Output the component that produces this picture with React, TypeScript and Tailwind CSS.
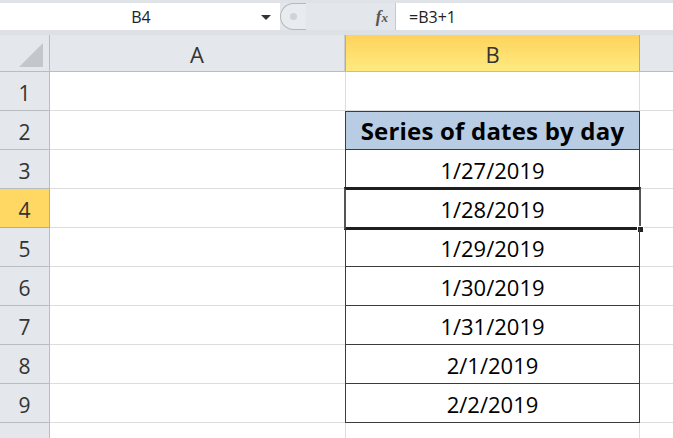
import React from 'react';

const dates = ['1/27/2019', '1/28/2019', '1/29/2019', '1/30/2019', '1/31/2019', '2/1/2019', '2/2/2019'];

function RowHead({ n, active }: { n: number; active?: boolean }) {
    return (
        <div
            className={
                active
                    ? 'flex w-[50px] shrink-0 items-center justify-center border-r border-b border-[#e2a640] bg-[#ffd763] pt-[5px] text-[21px] text-[#333]'
                    : 'flex w-[50px] shrink-0 items-center justify-center border-r border-b border-[#b9bcc0] bg-[#e4e7eb] pt-[5px] text-[21px] text-[#333]'
            }
        >
            {n < 10 ? n : ''}
        </div>
    );
}

export default function App() {
    const rows = [1, 2, 3, 4, 5, 6, 7, 8, 9, 10];
    return (
        <div className="h-[438px] w-[673px] overflow-hidden bg-white" style={{ fontFamily: '"Open Sans", "Liberation Sans", sans-serif' }}>
            {/* formula bar */}
            <div className="flex h-[35px] items-stretch border-t-[3px] border-b-[5px] border-t-[#dfe2e6] border-b-[#dde0e4] bg-[#e3e6ea]">
                <div className="relative flex w-[280px] items-center justify-center bg-white pl-[2px] text-[16px] text-[#222]">
                    B4
                    <span className="absolute right-[9px] top-[12px] h-0 w-0 border-x-[5px] border-t-[5px] border-x-transparent border-t-[#333]" />
                </div>
                <div className="relative flex w-[116px] items-center justify-end border-r border-[#c7cacd] pr-[7px]">
                    <div className="absolute left-0 top-0 flex h-[27px] w-[26px] items-center justify-center rounded-l-full border border-r-0 border-[#b5b8bc] bg-[#e9ecef]">
                        <span className="h-[7px] w-[7px] rounded-full bg-[#cfd3d7]" />
                    </div>
                    <span className="text-[17px] italic font-bold text-[#555]" style={{ fontFamily: '"Liberation Serif", serif' }}>
                        f<span className="text-[13px]">x</span>
                    </span>
                </div>
                <div className="flex flex-1 items-center bg-white pl-[13px] text-[16px] text-[#222]">=B3+1</div>
            </div>

            {/* column headers */}
            <div className="flex h-[37px] border-b border-[#b9bcc0]">
                <div className="relative w-[50px] shrink-0 border-r border-[#b9bcc0] bg-[#e4e7eb]">
                    <svg className="absolute bottom-[4px] right-[6px]" width="24" height="24" viewBox="0 0 24 24">
                        <polygon points="24,0 24,24 0,24" fill="#c3c7cb" />
                    </svg>
                </div>
                <div className="flex w-[295px] items-center justify-center border-r border-[#c9ccd0] bg-[#e4e7eb] pt-[3px] text-[22px] text-[#333]">A</div>
                <div className="flex w-[295px] items-center justify-center border-x border-[#e0a93c] bg-gradient-to-b from-[#fdd35b] to-[#ffea80] pt-[3px] text-[22px] text-[#333]">
                    B
                </div>
                <div className="flex-1 bg-[#e4e7eb]" />
            </div>

            {/* rows */}
            {rows.map((n) => {
                const inBox = n >= 2 && n <= 9;
                const isHead = n === 2;
                const active = n === 4;
                return (
                    <div key={n} className="flex h-[39px]">
                        <RowHead n={n} active={active} />
                        <div className="w-[295px] border-b border-[#dcdcdc]" />
                        {inBox ? (
                            <div
                                className={
                                    isHead
                                        ? 'relative flex w-[295px] items-center justify-center border border-[#3c3c3c] bg-[#b8cce4] pt-[1px] text-[24px] font-bold tracking-[0.2px] text-black'
                                        : active
                                          ? 'relative flex w-[295px] items-center justify-center border-x border-[#3c3c3c] pt-[2px] text-[22px] text-black'
                                          : 'relative flex w-[295px] items-center justify-center border-x border-b border-[#3c3c3c] pt-[2px] text-[22px] text-black'
                                }
                            >
                                {isHead ? 'Series of dates by day' : dates[n - 3]}
                                {active && (
                                    <>
                                        <div className="absolute left-[-2px] right-[-2px] top-[-2px] bottom-[-2px] border-[3px] border-[#1f1f1f] border-x-[2px] border-x-[#555]" />
                                        <div className="absolute right-[-5px] bottom-[-5px] h-[7px] w-[7px] border border-white bg-[#222]" />
                                    </>
                                )}
                            </div>
                        ) : (
                            <div className="w-[295px] border-x border-b border-[#dcdcdc]" />
                        )}
                        <div className="flex-1 border-b border-[#dcdcdc]" />
                    </div>
                );
            })}
        </div>
    );
}
